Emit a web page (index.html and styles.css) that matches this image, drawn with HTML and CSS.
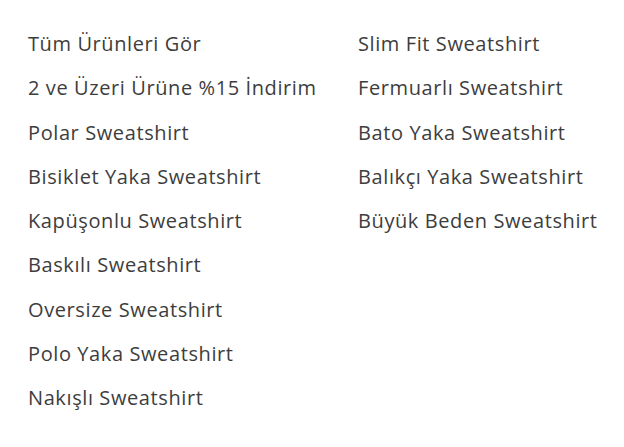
FILE: index.html
```html
<!DOCTYPE html>
<html lang="tr">
<head>
<meta charset="utf-8">
<link rel="stylesheet" href="styles.css">
</head>
<body>
<nav class="menu">
  <ul class="col col-left">
    <li><a href="#">Tüm Ürünleri Gör</a></li>
    <li><a href="#">2 ve Üzeri Ürüne %15 İndirim</a></li>
    <li><a href="#">Polar Sweatshirt</a></li>
    <li><a href="#">Bisiklet Yaka Sweatshirt</a></li>
    <li><a href="#">Kapüşonlu Sweatshirt</a></li>
    <li><a href="#">Baskılı Sweatshirt</a></li>
    <li><a href="#">Oversize Sweatshirt</a></li>
    <li><a href="#">Polo Yaka Sweatshirt</a></li>
    <li><a href="#">Nakışlı Sweatshirt</a></li>
  </ul>
  <ul class="col">
    <li><a href="#">Slim Fit Sweatshirt</a></li>
    <li><a href="#">Fermuarlı Sweatshirt</a></li>
    <li><a href="#">Bato Yaka Sweatshirt</a></li>
    <li><a href="#">Balıkçı Yaka Sweatshirt</a></li>
    <li><a href="#">Büyük Beden Sweatshirt</a></li>
  </ul>
</nav>
</body>
</html>
```
FILE: styles.css
```css
html, body {
  margin: 0;
  padding: 0;
  background: #ffffff;
}
.menu {
  display: flex;
  padding: 22px 0 0 28px;
  font-family: "Open Sans", "Noto Sans", sans-serif;
  font-size: 20px;
  letter-spacing: 0.6px;
}
.col {
  list-style: none;
  margin: 0;
  padding: 0;
}
.col-left {
  width: 330px;
}
.col li {
  height: 44.25px;
  line-height: 44.25px;
  white-space: nowrap;
}
.col a {
  color: #3d3d3d;
  text-decoration: none;
}
```
